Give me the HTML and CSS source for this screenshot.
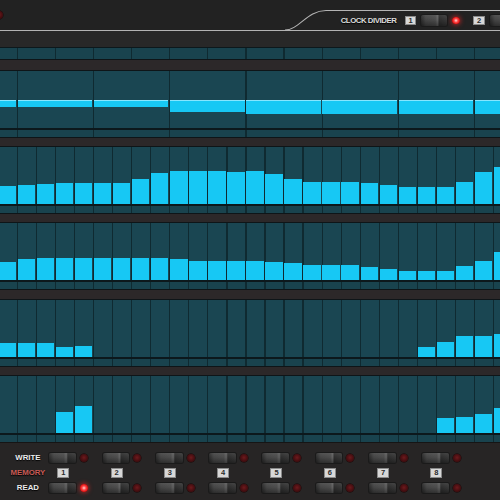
FILE: index.html
```html
<!DOCTYPE html>
<html>
<head>
<meta charset="utf-8">
<link rel="stylesheet" href="styles.css">
</head>
<body>
<div class="app">
  <header class="hdr">
    <div class="hdr-left"><span class="led off edge"></span></div>
    <svg class="curve" width="41" height="30" viewBox="0 0 41 30"><path d="M0 30 C14 30 22 10.5 41 10.5"/></svg>
    <div class="tab">
      <span class="hdr-label">CLOCK DIVIDER</span>
      <span class="num hn1">1</span>
      <span class="tog htog"></span>
      <span class="led on hled"></span>
      <span class="num hn2">2</span>
      <span class="tog htog t2"></span>
    </div>
  </header>
  <div class="gap"></div>
  <section class="lanes">
    <div class="lane first">
      <div class="ln"></div>
      <div class="strip d2"></div>
      <div class="sep"></div>
    </div>
    <div class="lane">
      <div class="main d4">
        <span class="s s1" style="height:7px"></span>
        <span class="s s4" style="height:7px"></span>
        <span class="s s4" style="height:7px"></span>
        <span class="s s4" style="height:12px"></span>
        <span class="s s4" style="height:14.3px"></span>
        <span class="s s4" style="height:14.3px"></span>
        <span class="s s4" style="height:14.3px"></span>
        <span class="s s2" style="height:14.3px"></span>
      </div>
      <div class="ln"></div>
      <div class="strip d4"></div>
      <div class="sep"></div>
    </div>
    <div class="lane">
      <div class="main d1">
        <span class="b" style="height:18.2px"></span>
        <span class="b" style="height:18.9px"></span>
        <span class="b" style="height:19.9px"></span>
        <span class="b" style="height:21.5px"></span>
        <span class="b" style="height:21.5px"></span>
        <span class="b" style="height:21.5px"></span>
        <span class="b" style="height:21.5px"></span>
        <span class="b" style="height:25.2px"></span>
        <span class="b" style="height:30.9px"></span>
        <span class="b" style="height:33.5px"></span>
        <span class="b" style="height:33.5px"></span>
        <span class="b" style="height:33.5px"></span>
        <span class="b" style="height:32.5px"></span>
        <span class="b" style="height:33.2px"></span>
        <span class="b" style="height:30.5px"></span>
        <span class="b" style="height:25.2px"></span>
        <span class="b" style="height:22.5px"></span>
        <span class="b" style="height:22.5px"></span>
        <span class="b" style="height:22.5px"></span>
        <span class="b" style="height:21.5px"></span>
        <span class="b" style="height:19.2px"></span>
        <span class="b" style="height:17.5px"></span>
        <span class="b" style="height:17.5px"></span>
        <span class="b" style="height:17.5px"></span>
        <span class="b" style="height:22.5px"></span>
        <span class="b" style="height:31.9px"></span>
        <span class="b" style="height:36.9px"></span>
      </div>
      <div class="ln"></div>
      <div class="strip d1"></div>
      <div class="sep"></div>
    </div>
    <div class="lane">
      <div class="main d1">
        <span class="b" style="height:18.1px"></span>
        <span class="b" style="height:21.7px"></span>
        <span class="b" style="height:22.7px"></span>
        <span class="b" style="height:22.7px"></span>
        <span class="b" style="height:22.7px"></span>
        <span class="b" style="height:22.7px"></span>
        <span class="b" style="height:22.7px"></span>
        <span class="b" style="height:22.7px"></span>
        <span class="b" style="height:22.7px"></span>
        <span class="b" style="height:21.1px"></span>
        <span class="b" style="height:19.7px"></span>
        <span class="b" style="height:19.4px"></span>
        <span class="b" style="height:19.4px"></span>
        <span class="b" style="height:19.7px"></span>
        <span class="b" style="height:18.7px"></span>
        <span class="b" style="height:17.1px"></span>
        <span class="b" style="height:15.1px"></span>
        <span class="b" style="height:15.1px"></span>
        <span class="b" style="height:15.1px"></span>
        <span class="b" style="height:13.7px"></span>
        <span class="b" style="height:11.4px"></span>
        <span class="b" style="height:9.7px"></span>
        <span class="b" style="height:9.7px"></span>
        <span class="b" style="height:9.7px"></span>
        <span class="b" style="height:14.7px"></span>
        <span class="b" style="height:19.7px"></span>
        <span class="b" style="height:28.1px"></span>
      </div>
      <div class="ln"></div>
      <div class="strip d1"></div>
      <div class="sep"></div>
    </div>
    <div class="lane">
      <div class="main d1">
        <span class="b" style="height:13.3px"></span>
        <span class="b" style="height:13.3px"></span>
        <span class="b" style="height:13.3px"></span>
        <span class="b" style="height:9.9px"></span>
        <span class="b" style="height:10.6px"></span>
        <span class="b"></span><span class="b"></span><span class="b"></span><span class="b"></span>
        <span class="b"></span><span class="b"></span><span class="b"></span><span class="b"></span>
        <span class="b"></span><span class="b"></span><span class="b"></span><span class="b"></span>
        <span class="b"></span><span class="b"></span><span class="b"></span><span class="b"></span>
        <span class="b"></span>
        <span class="b" style="height:9.9px"></span>
        <span class="b" style="height:14.3px"></span>
        <span class="b" style="height:20.9px"></span>
        <span class="b" style="height:20.9px"></span>
        <span class="b" style="height:22.6px"></span>
      </div>
      <div class="ln"></div>
      <div class="strip d1"></div>
      <div class="sep"></div>
    </div>
    <div class="lane last">
      <div class="main d1">
        <span class="b"></span><span class="b"></span><span class="b"></span>
        <span class="b" style="height:20.5px"></span>
        <span class="b" style="height:27.1px"></span>
        <span class="b"></span><span class="b"></span><span class="b"></span><span class="b"></span>
        <span class="b"></span><span class="b"></span><span class="b"></span><span class="b"></span>
        <span class="b"></span><span class="b"></span><span class="b"></span><span class="b"></span>
        <span class="b"></span><span class="b"></span><span class="b"></span><span class="b"></span>
        <span class="b"></span><span class="b"></span>
        <span class="b" style="height:14.5px"></span>
        <span class="b" style="height:15.5px"></span>
        <span class="b" style="height:18.8px"></span>
        <span class="b" style="height:25.1px"></span>
      </div>
      <div class="ln"></div>
      <div class="strip d1"></div>
    </div>
  </section>
  <section class="mem">
    <div class="lbl">WRITE</div>
    <div class="cell"><span class="tog"></span><span class="led off"></span></div>
    <div class="cell"><span class="tog"></span><span class="led off"></span></div>
    <div class="cell"><span class="tog"></span><span class="led off"></span></div>
    <div class="cell"><span class="tog"></span><span class="led off"></span></div>
    <div class="cell"><span class="tog"></span><span class="led off"></span></div>
    <div class="cell"><span class="tog"></span><span class="led off"></span></div>
    <div class="cell"><span class="tog"></span><span class="led off"></span></div>
    <div class="cell"><span class="tog"></span><span class="led off"></span></div>
    <div class="lbl memlbl">MEMORY</div>
    <div class="cell"><span class="num mnum">1</span></div>
    <div class="cell"><span class="num mnum">2</span></div>
    <div class="cell"><span class="num mnum">3</span></div>
    <div class="cell"><span class="num mnum">4</span></div>
    <div class="cell"><span class="num mnum">5</span></div>
    <div class="cell"><span class="num mnum">6</span></div>
    <div class="cell"><span class="num mnum">7</span></div>
    <div class="cell"><span class="num mnum">8</span></div>
    <div class="lbl">READ</div>
    <div class="cell"><span class="tog"></span><span class="led on"></span></div>
    <div class="cell"><span class="tog"></span><span class="led off"></span></div>
    <div class="cell"><span class="tog"></span><span class="led off"></span></div>
    <div class="cell"><span class="tog"></span><span class="led off"></span></div>
    <div class="cell"><span class="tog"></span><span class="led off"></span></div>
    <div class="cell"><span class="tog"></span><span class="led off"></span></div>
    <div class="cell"><span class="tog"></span><span class="led off"></span></div>
    <div class="cell"><span class="tog"></span><span class="led off"></span></div>
  </section>
</div>
</body>
</html>
```

FILE: styles.css
```css
* { box-sizing: border-box; margin: 0; padding: 0; }
html, body { width: 500px; height: 500px; overflow: hidden; background: #272525; }
body { font-family: "Liberation Sans", Arial, sans-serif; }

.app { width: 500px; height: 500px; overflow: hidden; display: flex; flex-direction: column; }

/* header */
.hdr { flex: none; height: 31px; display: flex; background: #222222; border-bottom: 1px solid #b4b4b4; overflow: hidden; }
.hdr-left { flex: none; width: 285px; display: flex; align-items: center; }
.curve { flex: none; display: block; overflow: visible; }
.curve path { fill: none; stroke: #b4b4b4; stroke-width: 1.1; }
.tab { flex: none; width: 190px; margin-top: 10px; border-top: 1px solid #b4b4b4; display: flex; align-items: center; padding-left: 14.7px; white-space: nowrap; }
.hdr-label { display: inline-block; width: 57.6px; font-size: 7.8px; font-weight: bold; letter-spacing: -0.45px; color: #dcdcdc; text-shadow: 0 1px 1px #000; }
.hn1 { margin-left: 8.4px; width: 11.6px; height: 8.5px; }
.hn2 { margin-left: 13.5px; width: 12.3px; height: 8.5px; }
.htog { margin-left: 4.4px; width: 26.6px; height: 11px; }
.t2 { margin-left: 5px; }
.hled { margin-left: 4.7px; width: 7.5px; height: 7.5px; }
.edge { margin-left: -4.7px; width: 8px; height: 8px; }

.gap { flex: none; height: 15.7px; background: #282828; }

/* lanes */
.lanes { flex: none; margin-left: -2.36px; width: 514.62px; }
.main { height: 57px; display: grid; grid-template-columns: repeat(27, 19.06px); align-items: end; background-color: #1a4652; }
.strip { height: 7px; background-color: #19434e; }
.ln { height: 2px; background: #0c181c; }
.sep { height: 10.2px; background: #2c2829; border-top: 1.6px solid #0e1518; border-bottom: 1.6px solid #0e1518; }
.first .ln { height: 1.6px; }
.first .strip { height: 11px; }
.first .sep { height: 11.7px; border-top-width: 1.7px; border-bottom-width: 1.7px; }

.d1 { background-image: repeating-linear-gradient(90deg, #0f2a31 0, #0f2a31 0.8px, transparent 0.8px, transparent 18.56px, #0f2a31 18.56px, #0f2a31 19.06px); }
.d2 { background-image: repeating-linear-gradient(90deg, transparent 0, transparent 18.56px, #0f2a31 18.56px, #0f2a31 19.86px, transparent 19.86px, transparent 38.12px); }
.d4 { background-image: repeating-linear-gradient(90deg, transparent 0, transparent 18.56px, #0f2a31 18.56px, #0f2a31 19.86px, transparent 19.86px, transparent 76.24px); }

.b { display: block; background: #17c8f4; margin: 0 0.6px 0 1px; }
.s { display: block; align-self: start; margin: 29px 0.6px 0 1px; background: #17c8f4; box-shadow: inset 0 1px 0 #86e6ff; }
.s1 { grid-column: span 1; }
.s2 { grid-column: span 2; }
.s4 { grid-column: span 4; }

/* memory panel */
.mem { flex: 1; background: #272525; border-top: 1px solid #161515; display: grid; grid-template-columns: 49.3px repeat(8, 53.3px); grid-template-rows: repeat(3, 15px); padding-top: 7.7px; align-items: center; }
.lbl { text-align: center; padding-left: 6.4px; font-size: 7.8px; font-weight: bold; color: #ececec; text-shadow: 0 1px 1px #000; white-space: nowrap; }
.memlbl { color: #c85a55; }
.cell { display: flex; align-items: center; }
.cell .tog { width: 26.7px; height: 10px; }
.cell .led { margin-left: 4px; width: 8px; height: 8px; }
.mnum { margin-left: 8px; width: 12px; height: 9.5px; }

/* components */
.tog { display: block; flex: none; border-radius: 2px;
  background:
    linear-gradient(180deg, rgba(255,255,255,0.07) 0%, rgba(0,0,0,0) 45%, rgba(0,0,0,0.35) 100%),
    linear-gradient(90deg, #2a2a2a 0%, #444444 18%, #4b4b4b 55%, #606060 64%, #2d2d2d 70%, #383838 100%);
  box-shadow: 0 0 0 1px #1a1a1a; }
.led { display: block; flex: none; border-radius: 50%; }
.led.off { background: radial-gradient(circle at 50% 45%, #6e1a1d 0%, #4a0f12 50%, #2a0808 100%); box-shadow: 0 0 0 0.5px #1a0505; }
.led.on { background: radial-gradient(circle at 50% 50%, #ffd6d6 0%, #ff4a4a 35%, #e01414 65%, #8a0606 100%); box-shadow: 0 0 4px 1px rgba(255,40,40,0.55); }
.num { display: flex; flex: none; align-items: center; justify-content: center; background: #d8d8d8; border: 1px solid #8a8a8a; color: #2a2a2a; font-size: 7.5px; font-weight: bold; line-height: 1; }
```
